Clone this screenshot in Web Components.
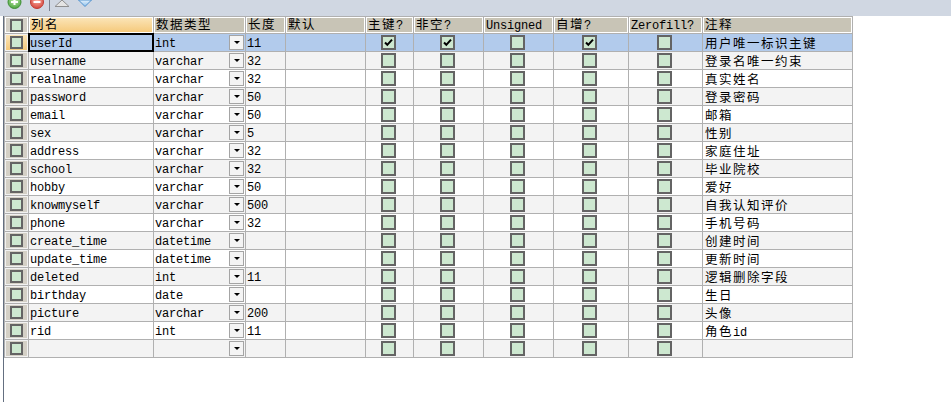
<!DOCTYPE html>
<html>
<head>
<meta charset="utf-8">
<style>
  html, body { margin: 0; padding: 0; background: #fff; height: 402px; overflow: hidden; }
</style>
</head>
<body>
<design-pane>
  <design-toolbar slot="toolbar"></design-toolbar>
  <column-grid id="grid"></column-grid>
</design-pane>

<script>
const COLS = "24px 125px 92px 40px 80px 48px 70px 70px 75px 74px 150px";
const MONO = '"Liberation Mono", "Noto Sans CJK SC", monospace';
const LINE = "#b0b0b0";

class DesignPane extends HTMLElement {
  constructor() {
    super();
    this.attachShadow({ mode: "open" }).innerHTML = `
      <style>
        :host { display: block; width: 951px; height: 402px; overflow: hidden; }
        .body { margin-left: 3px; border-left: 1px solid #646f80; height: 386px; }
      </style>
      <slot name="toolbar"></slot>
      <div class="body"><slot></slot></div>`;
  }
}

class DesignToolbar extends HTMLElement {
  constructor() {
    super();
    this.attachShadow({ mode: "open" }).innerHTML = `
      <style>
        :host { display: flex; height: 16px; background: #d0d7e2; overflow: hidden; align-items: flex-start; }
        svg { display: block; }
      </style>
      <svg width="110" height="16" viewBox="0 0 110 16">
        <defs>
          <radialGradient id="g" cx="50%" cy="35%" r="65%"><stop offset="0" stop-color="#c4eeb0"/><stop offset="1" stop-color="#4ca53e"/></radialGradient>
          <radialGradient id="r" cx="50%" cy="35%" r="65%"><stop offset="0" stop-color="#ffb4a8"/><stop offset="1" stop-color="#d4463c"/></radialGradient>
          <linearGradient id="b" x1="0" y1="0" x2="0" y2="1"><stop offset="0" stop-color="#e6f2fc"/><stop offset="1" stop-color="#8cc0ec"/></linearGradient>
        </defs>
        <circle cx="14.5" cy="2" r="6.5" fill="url(#g)" stroke="#3f8f35"/>
        <path d="M14.5 -2v7M11 2h7" stroke="#fff" stroke-width="2"/>
        <circle cx="37" cy="2" r="6.5" fill="url(#r)" stroke="#c03a32"/>
        <path d="M33.5 2h7" stroke="#fff" stroke-width="2"/>
        <path d="M49.5 0v11" stroke="#7a8290"/>
        <path d="M62 0L55 6.5H69Z" fill="#e4e4e4" stroke="#8f8f8f"/>
        <path d="M85 6.5L78.5 0H91.5Z" fill="url(#b)" stroke="#4f8fcc"/>
      </svg>`;
  }
}

class RowCheck extends HTMLElement {
  constructor() {
    super();
    const on = this.hasAttribute("checked");
    this.attachShadow({ mode: "open" }).innerHTML = `
      <style>
        :host { display: block; width: var(--box, 15px); height: var(--box, 15px); box-sizing: border-box; border: 2px solid #646464; background: #cde8d0; }
        svg { display: block; }
      </style>
      ${on ? '<svg width="11" height="11" viewBox="0 0 11 11"><path d="M2 5.5L4.3 7.8L9 2.6" fill="none" stroke="#000" stroke-width="2"/></svg>' : ""}`;
  }
}

class TypeSelect extends HTMLElement {
  constructor() {
    super();
    this.attachShadow({ mode: "open" }).innerHTML = `
      <style>
        :host { display: flex; justify-content: space-between; height: 100%; }
        span { padding-left: 1px; line-height: 21px; }
        b { flex: none; width: 15px; height: 15px; margin: 1px 0 0 0; box-sizing: border-box; border: 1px solid #a4a4a4; background: #f4f4f4; display: flex; align-items: center; justify-content: center; position: relative; left: -1px; }
        i { width: 0; height: 0; border: 3px solid transparent; border-top: 3px solid #000; border-bottom: 0; }
      </style>
      <span><slot></slot></span><b><i></i></b>`;
  }
}

class ColumnRow extends HTMLElement {
  constructor() {
    super();
    this.attachShadow({ mode: "open" }).innerHTML = `
      <style>
        :host {
          display: grid;
          grid-template-columns: ${COLS};
          height: 18px;
          box-sizing: border-box;
          border-bottom: 1px solid ${LINE};
          color: #000;
          background: var(--row-bg, #fff);
        }
        ::slotted(*) {
          box-sizing: border-box;
          border-right: 1px solid ${LINE};
          height: 17px;
          white-space: nowrap;
        }
      </style>
      <slot></slot>`;
  }
}

// cjk runs are drawn wider than the latin ones, like the original grid font
const runs = s => s.replace(/[\u4e00-\u9fff]+/g, m => `<span class="z">${m}</span>`);

class ColumnGrid extends HTMLElement {
  static HEAD = ["列名", "数据类型", "长度", "默认", "主键?", "非空?", "Unsigned", "自增?", "Zerofill?", "注释"];
  static ROWS = [
    ["userId", "int", "11", "11010", "用户唯一标识主键"],
    ["username", "varchar", "32", "", "登录名唯一约束"],
    ["realname", "varchar", "32", "", "真实姓名"],
    ["password", "varchar", "50", "", "登录密码"],
    ["email", "varchar", "50", "", "邮箱"],
    ["sex", "varchar", "5", "", "性别"],
    ["address", "varchar", "32", "", "家庭住址"],
    ["school", "varchar", "32", "", "毕业院校"],
    ["hobby", "varchar", "50", "", "爱好"],
    ["knowmyself", "varchar", "500", "", "自我认知评价"],
    ["phone", "varchar", "32", "", "手机号码"],
    ["create_time", "datetime", "", "", "创建时间"],
    ["update_time", "datetime", "", "", "更新时间"],
    ["deleted", "int", "11", "", "逻辑删除字段"],
    ["birthday", "date", "", "", "生日"],
    ["picture", "varchar", "200", "", "头像"],
    ["rid", "int", "11", "", "角色id"],
    ["", "", "", "", ""]
  ];

  constructor() {
    super();
    const head = ColumnGrid.HEAD.map((t, i) =>
      `<div class="hd${i == 0 ? " sel" : ""}">${runs(t)}</div>`).join("");
    const rows = ColumnGrid.ROWS.map((r, n) => {
      const flags = [0, 1, 2, 3, 4].map(i =>
        `<div class="c"><row-check ${r[3][i] == "1" ? "checked" : ""}></row-check></div>`).join("");
      return `<column-row style="--row-bg:${n == 0 ? "#b2cbec" : n % 2 ? "#f3f3f3" : "#fff"}">
        <div class="rh${n == 0 ? " sel" : ""}"><row-check></row-check></div>
        <div class="t${n == 0 ? " focus" : ""}">${r[0]}</div>
        <div><type-select>${r[1]}</type-select></div>
        <div class="t">${r[2]}</div>
        <div></div>
        ${flags}
        <div class="t note">${runs(r[4])}</div>
      </column-row>`;
    }).join("");
    this.attachShadow({ mode: "open" }).innerHTML = `
      <style>
        :host { display: block; width: 849px; font: 12px ${MONO}; letter-spacing: -0.2px; border-left: 1px solid ${LINE}; border-top: 1px solid ${LINE}; box-sizing: border-box; --box: 15px; }
        .head { display: grid; grid-template-columns: ${COLS}; height: 17px; border-bottom: 1px solid ${LINE}; box-sizing: border-box; }
        .hd, .hc { box-sizing: border-box; background: #c8c4b6; box-shadow: inset 0 0 0 1px #fff; border-right: 1px solid ${LINE}; height: 16px; padding-left: 2px; line-height: 18px; white-space: nowrap; }
        .hc { display: flex; align-items: center; justify-content: center; padding: 0; background: #d4d0c6; --box: 13px; }
        .hd.sel, .rh.sel { background: linear-gradient(#fbe6bb, #f5c878); }
        .rh { background: #d4d0c6; box-shadow: inset 0 0 0 1px #f2f2f2; display: flex; align-items: center; justify-content: center; --box: 13px; }
        .t { padding-left: 1px; line-height: 21px; }
        .note { padding-left: 2px; line-height: 22px; }
        .z { font-family: "Noto Sans CJK SC", sans-serif; font-size: 12.5px; letter-spacing: 1.5px; line-height: 1; }
        .c { display: flex; align-items: center; justify-content: center; padding-right: 3px; }
        .focus { position: relative; background: #b2cbec; z-index: 1; }
        .focus::after { content: ""; position: absolute; top: -1px; left: -1px; right: -1px; bottom: -1px; border: 2px solid #000; }
      </style>
      <div class="head"><div class="hc"><row-check></row-check></div>${head}</div>
      ${rows}`;
  }
}

customElements.define("row-check", RowCheck);
customElements.define("type-select", TypeSelect);
customElements.define("column-row", ColumnRow);
customElements.define("column-grid", ColumnGrid);
customElements.define("design-toolbar", DesignToolbar);
customElements.define("design-pane", DesignPane);
</script>
</body>
</html>
